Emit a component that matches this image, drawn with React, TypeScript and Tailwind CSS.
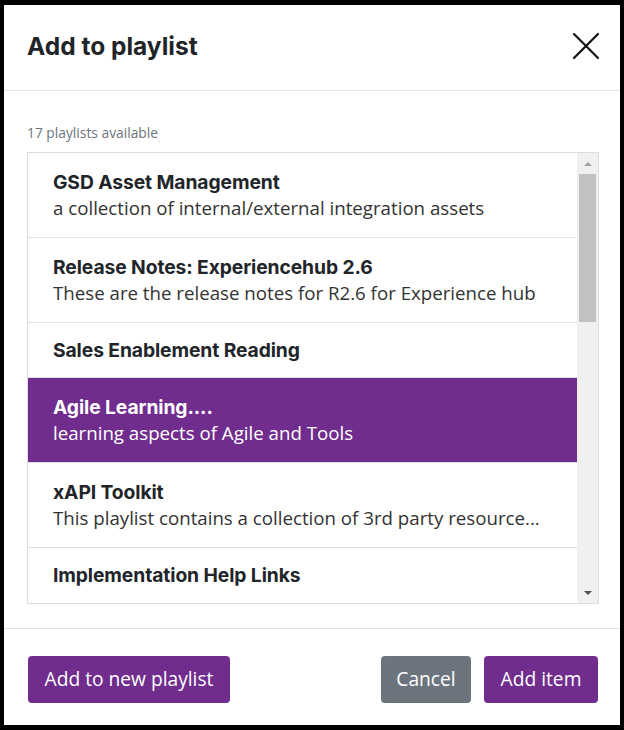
import React from "react";

type Item = { title: string; desc?: string; selected?: boolean };

const items: Item[] = [
  { title: "GSD Asset Management", desc: "a collection of internal/external integration assets" },
  { title: "Release Notes: Experiencehub 2.6", desc: "These are the release notes for R2.6 for Experience hub" },
  { title: "Sales Enablement Reading" },
  { title: "Agile Learning....", desc: "learning aspects of Agile and Tools", selected: true },
  { title: "xAPI Toolkit", desc: "This playlist contains a collection of 3rd party resource..." },
  { title: "Implementation Help Links" },
];

export default function App() {
  return (
    <div className="w-[624px] h-[730px] bg-black pt-[5px] pb-[5px] px-[4px]">
      <div className="w-full h-full bg-white flex flex-col">
        {/* Header */}
        <div className="h-[86px] shrink-0 flex items-center justify-between pl-[23px] pr-[21px] border-b border-[#e2e2e2]">
          <h1 className="font-['Inter',sans-serif] font-bold text-[24.5px] leading-none text-[#212529] mt-[-3px]">
            Add to playlist
          </h1>
          <svg width="26" height="26" viewBox="0 0 26 26" className="mt-[-4px]">
            <path d="M1 1 L25 25 M25 1 L1 25" stroke="#111" strokeWidth="2.2" strokeLinecap="round" />
          </svg>
        </div>

        {/* Body */}
        <div className="pl-[23px] pr-[21px] pt-[32px] pb-[24px]">
          <div className="font-['Open_Sans',sans-serif] text-[13.8px] leading-[20px] text-[#6c757d] mb-[9px]">
            17 playlists available
          </div>
          <div className="h-[452px] border border-[#dcdcdc] flex">
            <div className="flex-1 flex flex-col overflow-hidden">
              {items.map((it, i) => (
                <div
                  key={i}
                  className={
                    (it.desc ? "h-[85px] pt-[16px] " : "h-[55px] pt-[14px] ") +
                    (it.selected ? "bg-[#702d8e] text-white " : "bg-white text-[#212529] ") +
                    (i < items.length - 1 ? "border-b border-[#e0e0e0] " : "") +
                    "shrink-0 pl-[25px] pr-[10px]"
                  }
                >
                  <div className="font-['Inter',sans-serif] font-bold text-[19.3px] leading-[26px] tracking-[-0.1px]">{it.title}</div>
                  {it.desc && (
                    <div
                      className={
                        "font-['Open_Sans',sans-serif] text-[18.7px] leading-[26px] whitespace-nowrap " +
                        (it.selected ? "text-white" : "text-[#333333]")
                      }
                    >
                      {it.desc}
                    </div>
                  )}
                </div>
              ))}
            </div>
            {/* Scrollbar */}
            <div className="w-[21px] bg-[#f0f0f0] flex flex-col items-center">
              <div className="h-[21px] w-full flex items-center justify-center">
                <div className="w-0 h-0 border-l-[4px] border-r-[4px] border-b-[4px] border-l-transparent border-r-transparent border-b-[#a3a3a3]" />
              </div>
              <div className="w-[17px] h-[148px] bg-[#c1c1c1]" />
              <div className="flex-1" />
              <div className="h-[21px] w-full flex items-center justify-center">
                <div className="w-0 h-0 border-l-[4px] border-r-[4px] border-t-[4px] border-l-transparent border-r-transparent border-t-[#505050]" />
              </div>
            </div>
          </div>
        </div>

        {/* Footer */}
        <div className="border-t border-[#e2e2e2] pt-[27px] pb-[22px] pl-[24px] pr-[22px] flex items-center justify-between">
          <button className="h-[47px] w-[202px] rounded-[4px] bg-[#702d8e] text-white font-['Open_Sans',sans-serif] text-[19.2px]">
            Add to new playlist
          </button>
          <div className="flex gap-[13px]">
            <button className="h-[47px] w-[90px] rounded-[4px] bg-[#6c757d] text-white font-['Open_Sans',sans-serif] text-[19.2px]">
              Cancel
            </button>
            <button className="h-[47px] w-[114px] rounded-[4px] bg-[#702d8e] text-white font-['Open_Sans',sans-serif] text-[19.2px]">
              Add item
            </button>
          </div>
        </div>
      </div>
    </div>
  );
}
